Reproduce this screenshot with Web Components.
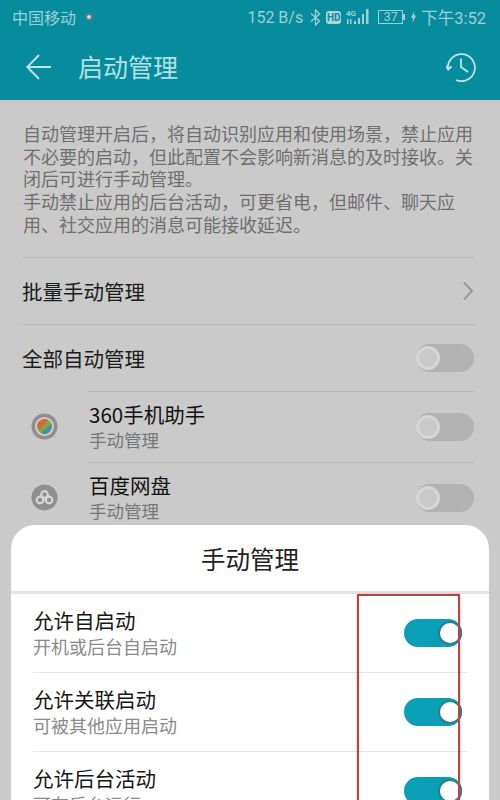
<!DOCTYPE html>
<html lang="zh"><head><meta charset="utf-8"><style>
html,body{margin:0;padding:0}
body{width:500px;height:800px;overflow:hidden;position:relative;background:#cacaca;font-family:"Noto Sans CJK SC","Roboto",sans-serif}
</style></head><body>
<settings-page></settings-page>
<script>
function def(name,html){customElements.define(name,class extends HTMLElement{constructor(){super();this.attachShadow({mode:'open'}).innerHTML=html;}})}
def('toggle-switch',`<style>:host{display:block;flex:none;width:58px;height:28px;border-radius:14px;background:#b2b2b2;position:relative}
.k{position:absolute;left:0;top:2px;width:18px;height:18px;border:3px solid #d6d6d6;background:#c9c9c9;border-radius:50%;box-sizing:content-box}
:host([on]){background:#0a9fb7}
:host([on]) .k{top:2px;width:20px;height:20px;border:2px solid #2a7f90;background:#fff;left:34px}
</style><div class="k"></div>`);
def('status-bar',`<style>:host{display:flex;align-items:center;height:34px;padding:0 14px 2px 12px;color:#9cd0d8;font-size:16px}
.d{width:4px;height:4px;border-radius:50%;background:#d6dccf;border:2px solid #4f7f8c;margin-left:9px}
.s{flex:1}.r{display:flex;align-items:center;font-family:Roboto,"Noto Sans CJK SC",sans-serif}
.hd{font:700 10px/13px Roboto,sans-serif;background:#a8d6dd;color:#0a8a9c;border-radius:3px;width:15px;height:13px;text-align:center;margin:0 5px}
.b{width:23px;height:12px;border:1px solid #9cd0d8;font-size:12.500px;line-height:12px;text-align:center;position:relative;margin:0 8px 0 7px}
.b::after{content:"";position:absolute;right:-3px;top:3px;width:2px;height:6px;background:#9cd0d8}
svg{display:block}
.t{font-size:16.500px;margin-left:5px}
</style><span>中国移动</span><span class="d"></span><span class="s"></span><div class="r"><span>152 B/s</span>
<svg style="margin-left:7px" width="11" height="17" viewBox="0 0 11 17" fill="none" stroke="#9cd0d8" stroke-width="1.300"><path d="M1 4.500 9.500 12 5.500 16V1L9.500 5 1 12.500"/></svg><span class="hd">HD</span>
<svg width="25" height="17" viewBox="0 0 25 17" fill="#9cd0d8"><text x="0" y="7" font-family="Roboto" font-weight="700" font-size="8">4G</text><rect x="1" y="10" width="1.500" height="5"/><rect x="4" y="10" width="1.500" height="5"/><rect x="8" y="12" width="2" height="3"/><rect x="12" y="9" width="2" height="6"/><rect x="16" y="5" width="2" height="10"/><rect x="20" y="0" width="2.500" height="15"/></svg>
<span class="b">37</span>
<svg width="5" height="12" viewBox="0 0 5 12" fill="#9cd0d8"><path d="M3.200 0 0 7h2L1.500 12 5 4.500H3z"/></svg>
<span class="t">下午3:52</span></div>`);
def('app-bar',`<style>:host{display:flex;align-items:center;height:64px;padding:0 24px 3px 26px;box-sizing:border-box;color:#b5e0e5;font-size:25px}
svg{display:block}.t{margin:0 0 2px 27px;flex:1}</style>
<svg width="25" height="26" viewBox="0 0 25 26" fill="none" stroke="#c0e4e8" stroke-width="1.900"><path d="M13 1 1.300 13 13 25M2 13H25"/></svg>
<span class="t">启动管理</span>
<svg width="30" height="30" viewBox="0 0 30 30" fill="none" stroke="#c0e4e8" stroke-width="1.800"><path d="M2 17A13.500 13.500 0 1 1 10 28"/><path d="M0 14 2.200 17.500 5.500 14.500"/><path d="M15 6.500V15L22 20"/></svg>`);
def('intro-text',`<style>:host{display:block;padding:22px 23px 21px;color:#6f6f6f;font-size:18px;line-height:22.700px}p{margin:0;white-space:nowrap}</style><p><slot></slot></p>`);
def('setting-row',`<style>:host{display:flex;align-items:center;height:66px;margin:0 26px 0 23px;border-top:1px solid #b6b6b6;color:#1c1c1c;font-size:20.500px;justify-content:space-between}
span{margin-left:-1px}</style><span><slot></slot></span><slot name="end"></slot>`);
def('app-row',`<style>:host{display:flex;align-items:center;height:71px;margin-right:26px;color:#111;font-size:20.500px}
.i{width:27px;height:27px;margin-left:31px;flex:none}.m{margin-left:30px;flex:1;border-top:1px solid #b6b6b6;height:70px;display:flex;align-items:center;justify-content:space-between}
.x{display:flex;flex-direction:column;line-height:26px;padding:1px 0 0 1px}.sub{font-size:17.500px;color:#777}
</style><div class="i"><slot name="icon"></slot></div><div class="m"><div class="x"><slot></slot><span class="sub"><slot name="sub"></slot></span></div><toggle-switch></toggle-switch></div>`);
def('perm-row',`<style>:host{display:flex;align-items:center;height:79px;margin:0 22px;border-bottom:1px solid #e6e6e6;justify-content:space-between;box-sizing:border-box}
.x{display:flex;flex-direction:column;color:#161616;font-size:20.500px;line-height:26px;margin-top:-1px}.sub{font-size:18px;color:#8a8a8a}
toggle-switch{margin-right:5px}</style>
<div class="x"><slot></slot><span class="sub"><slot name="sub"></slot></span></div><toggle-switch on></toggle-switch>`);
def('bottom-sheet',`<style>:host{display:block;position:absolute;left:11px;top:525px;width:478px;height:275px;overflow:hidden;background:#fff;border-radius:24px 24px 0 0}
h2{margin:0;height:69px;line-height:68px;font-weight:400;text-align:center;font-size:24.500px;color:#222;border-bottom:3px solid #e4e4e4;box-sizing:border-box}
</style><h2><slot name="title"></slot></h2><slot></slot>`);
def('highlight-box',`<style>:host{position:absolute;left:357px;top:594px;width:103px;height:206px;box-sizing:border-box;border:2px solid #c0403f;border-bottom:0;box-shadow:0 0 2px rgba(192,64,63,.45);pointer-events:none}</style>`);
def('settings-page',`<style>:host{display:block}.top{background:#068c9c}svg{display:block}</style>
<div class="top"><status-bar></status-bar><app-bar></app-bar></div>
<intro-text>自动管理开启后，将自动识别应用和使用场景，禁止应用<br>不必要的启动，但此配置不会影响新消息的及时接收。关<br>闭后可进行手动管理。<br>手动禁止应用的后台活动，可更省电，但邮件、聊天应<br>用、社交应用的消息可能接收延迟。</intro-text>
<setting-row>批量手动管理<svg slot="end" width="12" height="20" viewBox="0 0 12 20" fill="none" stroke="#999" stroke-width="2"><path d="M2 1.500 10 10 2 18.500"/></svg></setting-row>
<setting-row>全部自动管理<toggle-switch slot="end"></toggle-switch></setting-row>
<app-row>360手机助手<span slot="sub">手动管理</span><svg slot="icon" width="27" height="27" viewBox="0 0 27 27"><circle cx="13.500" cy="13.500" r="13" fill="#8f8f8f"/><circle cx="13.500" cy="13.500" r="9.500" fill="#dcc8cc"/><circle cx="13.500" cy="13.500" r="7.500" fill="#7eaa3a"/><path d="M6.500 11A7.500 7.500 0 0 1 17 7L8 17.500z" fill="#d8663c"/><path d="M10 20 20 10.500A7.500 7.500 0 0 1 13 21z" fill="#3f93ad"/></svg></app-row>
<app-row>百度网盘<span slot="sub">手动管理</span><svg slot="icon" width="27" height="27" viewBox="0 0 27 27"><circle cx="13.500" cy="13.500" r="13" fill="#8f8f8f"/><g fill="none" stroke="#d8d8d8" stroke-width="2.200"><circle cx="13.500" cy="10.500" r="3.300"/><circle cx="9" cy="16" r="3.300"/><circle cx="18" cy="16" r="3.300"/></g></svg></app-row>
<bottom-sheet><span slot="title">手动管理</span>
<perm-row>允许自启动<span slot="sub">开机或后台自启动</span></perm-row>
<perm-row>允许关联启动<span slot="sub">可被其他应用启动</span></perm-row>
<perm-row>允许后台活动<span slot="sub">可在后台运行</span></perm-row>
</bottom-sheet><highlight-box></highlight-box>`);
</script></body></html>
